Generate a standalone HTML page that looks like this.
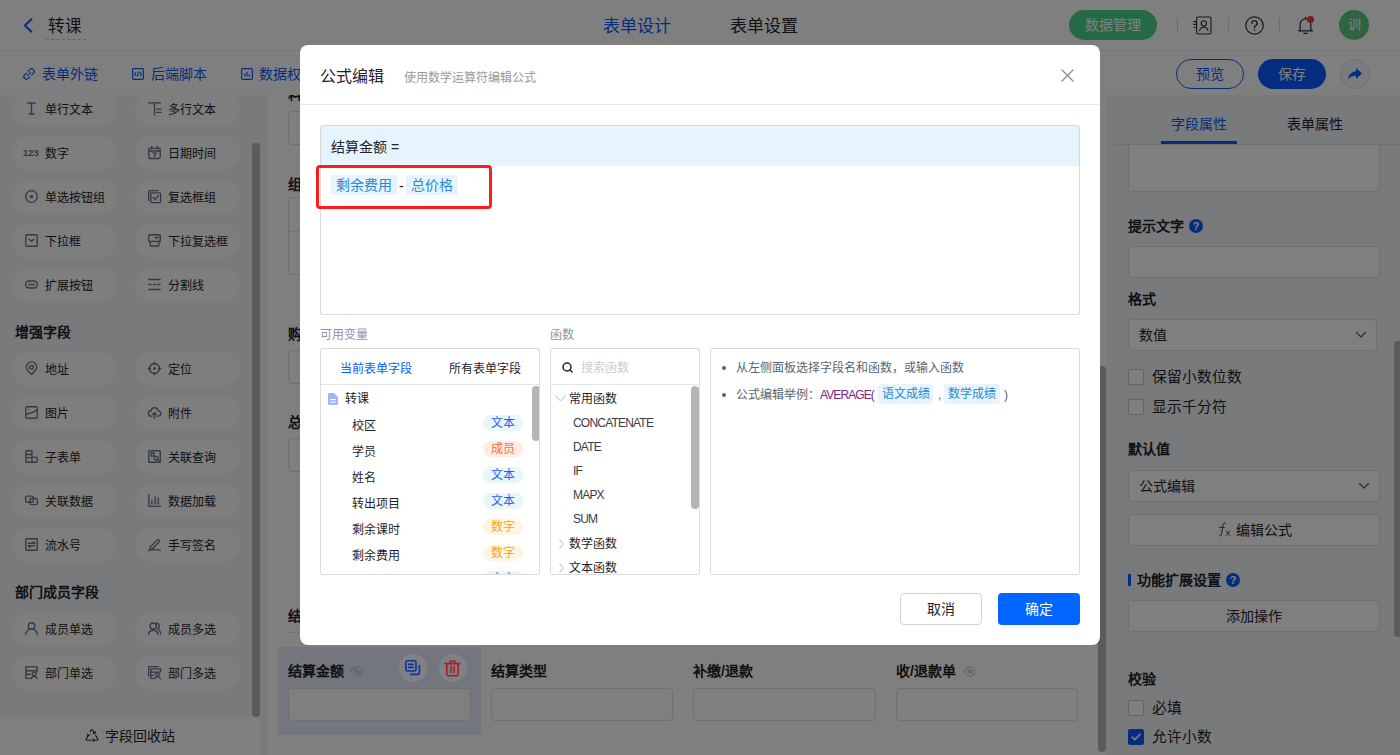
<!DOCTYPE html>
<html lang="zh-CN"><head><meta charset="utf-8">
<style>
*{box-sizing:border-box;margin:0;padding:0}
html,body{width:1400px;height:755px;overflow:hidden;background:#fff}
body{font-family:"Liberation Sans",sans-serif;color:#1f2329;position:relative}
.a{position:absolute;white-space:nowrap}
svg{display:block;overflow:visible}
/* header */
#hdr{left:0;top:0;width:1400px;height:51px;background:#fff;border-bottom:1px solid #ebecee}
#tb{left:0;top:51px;width:1400px;height:44px;background:#fff}
#side{left:0;top:95px;width:268px;height:660px;background:#f2f4f7}
#canvas{left:268px;top:95px;width:838px;height:660px;background:#fff;overflow:hidden}
#rp{left:1106px;top:95px;width:294px;height:660px;background:#f2f4f7;overflow:hidden}
.pill{position:absolute;width:105px;height:34px;border-radius:17px;background:#fcfcfd}
.pill span{position:absolute;left:33px;top:10px;font-size:12px;line-height:16px;color:#1f2329}
.pill svg{position:absolute;left:13px;top:10px}
.sh{position:absolute;left:15px;font-size:14px;font-weight:bold;line-height:20px;color:#1f2329}
.inp{border:1px solid #dcdfe5;border-radius:4px;background:#fff}
.ftag{height:20px;border-radius:2px;background:#e8f3fd;color:#268bd0;font-size:14px;line-height:20px;text-align:center}
.dtag{height:20px;border-radius:3px;background:#e8f3fd;color:#268bd0;font-size:12px;line-height:20px;text-align:center}
.pnl{border:1px solid #dcdcdc;border-radius:2px;overflow:hidden;background:#fff}
.fn{font-size:12px;line-height:20px;color:#3c3c44;letter-spacing:-0.8px}
.mask{left:0;top:0;width:1400px;height:755px;background:rgba(0,0,0,0.5)}
#modal{left:300px;top:45px;width:800px;height:600px;background:#fff;border-radius:8px}
</style></head><body>
<!-- ===== header ===== -->
<div class="a" id="hdr">
  <svg class="a" style="left:23px;top:18px" width="10" height="15" viewBox="0 0 10 15"><path d="M8.5 1.2 L1.8 7.5 L8.5 13.8" fill="none" stroke="#0a5bff" stroke-width="2" stroke-linecap="round" stroke-linejoin="round"/></svg>
  <div class="a" style="left:48px;top:14.5px;font-size:16.6px;line-height:24px;color:#1f2329">转课</div>
  <div class="a" style="left:46px;top:39px;width:40px;height:0;border-top:1px dashed #c9ccd2"></div>
  <div class="a" style="left:603px;top:15px;font-size:17px;line-height:24px;color:#0a5bff">表单设计</div>
  <div class="a" style="left:730px;top:15px;font-size:17px;line-height:24px;color:#1f2329">表单设置</div>
  <div class="a" style="left:1069px;top:10px;width:88px;height:30px;border-radius:15px;background:#4bd38d;color:#fff;font-size:14px;line-height:30px;text-align:center">数据管理</div>
  <div class="a" style="left:1177px;top:18px;width:1px;height:14px;background:#d5d7db"></div>
  <div class="a" style="left:1228px;top:18px;width:1px;height:14px;background:#d5d7db"></div>
  <div class="a" style="left:1279px;top:18px;width:1px;height:14px;background:#d5d7db"></div>
  <svg class="a" style="left:1193px;top:16px" width="19" height="19" viewBox="0 0 19 19" fill="none" stroke="#2b2f36" stroke-width="1.1" stroke-linecap="round" stroke-linejoin="round"><rect x="3.6" y="1" width="14.4" height="17" rx="1.4"/><circle cx="10.8" cy="7.4" r="2.6"/><path d="M6.6 14.6 A4.3 4.3 0 0 1 15 14.6 M0.8 5.6 H3.6 M0.8 8.4 H3.6 M0.8 11.2 H3.6"/></svg>
  <svg class="a" style="left:1245px;top:16px" width="19" height="19" viewBox="0 0 19 19" fill="none" stroke="#2b2f36" stroke-width="1.2" stroke-linecap="round"><circle cx="9.5" cy="9.5" r="8.7"/><path d="M6.9 7.3 A2.6 2.6 0 1 1 10.6 9.6 C9.9 9.9 9.5 10.5 9.5 11.2 V11.8" stroke-width="1.4"/><circle cx="9.5" cy="14.2" r="0.8" fill="#2b2f36" stroke="none"/></svg>
  <svg class="a" style="left:1297px;top:16px" width="17" height="19" viewBox="0 0 17 19" fill="none" stroke="#2b2f36" stroke-width="1.2" stroke-linecap="round" stroke-linejoin="round"><path d="M8.5 1 V2.6 M3.2 13.6 V8.4 C3.2 5.2 5.5 2.8 8.5 2.8 C11.5 2.8 13.8 5.2 13.8 8.4 V13.6 C13.8 14.2 14.6 14.6 15.4 14.8 H1.6 C2.4 14.6 3.2 14.2 3.2 13.6 Z M6.8 17.4 H10.2"/></svg>
  <div class="a" style="left:1307px;top:16px;width:6.5px;height:6.5px;border-radius:50%;background:#f03c3c"></div>
  <div class="a" style="left:1339px;top:10px;width:30px;height:30px;border-radius:15px;background:#5cc97f;color:#fff;font-size:13px;line-height:30px;text-align:center">训</div>
</div>
<!-- ===== toolbar ===== -->
<div class="a" id="tb">
  <svg class="a" style="left:23px;top:17px" width="12" height="12" viewBox="0 0 12 12" fill="none" stroke="#0a5bff" stroke-width="1.2" stroke-linecap="round"><path d="M5.2 3.2 L6.8 1.6 A2.4 2.4 0 0 1 10.4 5.2 L8.8 6.8"/><path d="M6.8 8.8 L5.2 10.4 A2.4 2.4 0 0 1 1.6 6.8 L3.2 5.2"/><path d="M4.3 7.7 L7.7 4.3"/></svg>
  <div class="a" style="left:42px;top:13px;font-size:14px;line-height:20px;color:#0a5bff">表单外链</div>
  <svg class="a" style="left:132px;top:17px" width="12" height="12" viewBox="0 0 12 12" fill="none" stroke="#0a5bff" stroke-width="1.2" stroke-linejoin="round"><rect x="0.6" y="0.6" width="10.8" height="10.8" rx="1.2"/><path d="M4 4 L2.6 6 L4 8 M8 4 L9.4 6 L8 8 M6.6 3.6 L5.4 8.4"/></svg>
  <div class="a" style="left:151px;top:13px;font-size:14px;line-height:20px;color:#0a5bff">后端脚本</div>
  <svg class="a" style="left:241px;top:17px" width="12" height="12" viewBox="0 0 12 12" fill="none" stroke="#0a5bff" stroke-width="1.2"><rect x="0.6" y="0.6" width="10.8" height="10.8" rx="1.2"/><path d="M3.8 5.5 V8.6 M6 3.8 V8.6 M8.2 6.2 V8.6"/></svg>
  <div class="a" style="left:259px;top:13px;font-size:14px;line-height:20px;color:#0a5bff">数据权限</div>
  <div class="a" style="left:1176px;top:8px;width:68px;height:30px;border-radius:15px;border:1px solid #0a5bff;color:#0a5bff;font-size:14px;line-height:28px;text-align:center">预览</div>
  <div class="a" style="left:1258px;top:8px;width:68px;height:30px;border-radius:15px;background:#0a5bff;color:#fff;font-size:14px;line-height:30px;text-align:center">保存</div>
  <div class="a" style="left:1340px;top:8px;width:30px;height:30px;border-radius:15px;background:#f3f6fb;border:1px solid #dde4f0"></div>
  <svg class="a" style="left:1347px;top:16px" width="16" height="14" viewBox="0 0 16 14"><path d="M9 1 L15 6.5 L9 12 V8.8 C5.5 8.8 3 9.8 1 12.6 C1.6 8 4 5 9 4.3 Z" fill="#0a5bff"/></svg>
</div>
<!-- ===== sidebar ===== -->
<div class="a" id="side">
<div class="pill" style="left:12px;top:-3px"><svg width="13" height="13" viewBox="0 0 12 12"><path d="M2.6 0.9 H9.4 M6 0.9 V11.1 M3.8 11.1 H8.2" fill="none" stroke="#67738a" stroke-width="1.25" stroke-linecap="round" stroke-linejoin="round" stroke-width="1.5" stroke-linecap="butt"/></svg><span>单行文本</span></div>
<div class="pill" style="left:135px;top:-3px"><svg width="13" height="13" viewBox="0 0 12 12"><path d="M0.4 0.8 H11.6 M6 0.8 V12 M8 6.6 H12 M8 9.6 H12" fill="none" stroke="#67738a" stroke-width="1.25" stroke-linecap="round" stroke-linejoin="round" stroke-width="1.4" stroke-linecap="butt"/></svg><span>多行文本</span></div>
<div class="pill" style="left:12px;top:41px"><svg width="13" height="13" viewBox="0 0 12 12"><text x="-2" y="9.2" font-family="Liberation Sans" font-weight="bold" font-size="9.2" fill="#67738a" letter-spacing="-0.3">123</text></svg><span>数字</span></div>
<div class="pill" style="left:135px;top:41px"><svg width="13" height="13" viewBox="0 0 12 12"><rect x="0.7" y="1.9" width="10.6" height="9.6" rx="1.3" fill="none" stroke="#67738a" stroke-width="1.25" stroke-linecap="round" stroke-linejoin="round"/><path d="M0.7 4.6 H11.3 M3.4 0.5 V2.8 M8.6 0.5 V2.8 M4.6 6.4 H7.4 L5.6 9.8" fill="none" stroke="#67738a" stroke-width="1.25" stroke-linecap="round" stroke-linejoin="round"/></svg><span>日期时间</span></div>
<div class="pill" style="left:12px;top:85px"><svg width="13" height="13" viewBox="0 0 12 12"><circle cx="6" cy="6" r="5.4" fill="none" stroke="#67738a" stroke-width="1.25" stroke-linecap="round" stroke-linejoin="round"/><circle cx="6" cy="6" r="1.5" fill="#67738a"/></svg><span>单选按钮组</span></div>
<div class="pill" style="left:135px;top:85px"><svg width="13" height="13" viewBox="0 0 12 12"><path d="M0.6 9.6 V1.6 A1 1 0 0 1 1.6 0.6 H9.4" fill="none" stroke="#67738a" stroke-width="1.25" stroke-linecap="round" stroke-linejoin="round"/><rect x="2.6" y="2.6" width="9" height="9" rx="0.8" fill="none" stroke="#67738a" stroke-width="1.25" stroke-linecap="round" stroke-linejoin="round"/><path d="M4.8 7 L6.6 8.8 L9.6 5.2" fill="none" stroke="#67738a" stroke-width="1.25" stroke-linecap="round" stroke-linejoin="round"/></svg><span>复选框组</span></div>
<div class="pill" style="left:12px;top:129px"><svg width="13" height="13" viewBox="0 0 12 12"><rect x="0.7" y="0.7" width="10.6" height="10.6" rx="0.8" fill="none" stroke="#67738a" stroke-width="1.25" stroke-linecap="round" stroke-linejoin="round"/><path d="M3.8 4.8 L6 6.8 L8.2 4.8" fill="none" stroke="#67738a" stroke-width="1.25" stroke-linecap="round" stroke-linejoin="round"/></svg><span>下拉框</span></div>
<div class="pill" style="left:135px;top:129px"><svg width="13" height="13" viewBox="0 0 12 12"><path d="M0.7 1.5 A0.8 0.8 0 0 1 1.5 0.7 H10.5 A0.8 0.8 0 0 1 11.3 1.5 V6.8 H0.7 Z M2 6.8 V10.3 A0.8 0.8 0 0 0 2.8 11.1 H9.2 A0.8 0.8 0 0 0 10 10.3 V6.8" fill="none" stroke="#67738a" stroke-width="1.25" stroke-linecap="round" stroke-linejoin="round"/><path d="M6.6 2.8 L8 4.2 L9.4 2.8" fill="none" stroke="#67738a" stroke-width="1.25" stroke-linecap="round" stroke-linejoin="round"/></svg><span>下拉复选框</span></div>
<div class="pill" style="left:12px;top:173px"><svg width="13" height="13" viewBox="0 0 12 12"><rect x="0.6" y="2.8" width="10.8" height="6.4" rx="3.2" fill="none" stroke="#67738a" stroke-width="1.25" stroke-linecap="round" stroke-linejoin="round"/><path d="M3.4 6 H8.6" fill="none" stroke="#67738a" stroke-width="1.25" stroke-linecap="round" stroke-linejoin="round"/></svg><span>扩展按钮</span></div>
<div class="pill" style="left:135px;top:173px"><svg width="13" height="13" viewBox="0 0 12 12"><path d="M0.8 1.4 H11.2 M0.8 6 H2.8 M5 6 H7 M9.2 6 H11.2 M0.8 10.6 H11.2" fill="none" stroke="#67738a" stroke-width="1.25" stroke-linecap="round" stroke-linejoin="round"/></svg><span>分割线</span></div>
<div class="pill" style="left:12px;top:257px"><svg width="13" height="13" viewBox="0 0 12 12"><path d="M6 11.6 C2.8 8.6 1.2 6.4 1.2 4.7 A4.8 4.8 0 0 1 10.8 4.7 C10.8 6.4 9.2 8.6 6 11.6 Z" fill="none" stroke="#67738a" stroke-width="1.25" stroke-linecap="round" stroke-linejoin="round"/><circle cx="6" cy="4.9" r="1.7" fill="none" stroke="#67738a" stroke-width="1.25" stroke-linecap="round" stroke-linejoin="round"/></svg><span>地址</span></div>
<div class="pill" style="left:135px;top:257px"><svg width="13" height="13" viewBox="0 0 12 12"><circle cx="6" cy="6" r="4.6" fill="none" stroke="#67738a" stroke-width="1.25" stroke-linecap="round" stroke-linejoin="round"/><circle cx="6" cy="6" r="1.3" fill="#67738a"/><path d="M6 0.2 V2.2 M6 9.8 V11.8 M0.2 6 H2.2 M9.8 6 H11.8" fill="none" stroke="#67738a" stroke-width="1.25" stroke-linecap="round" stroke-linejoin="round"/></svg><span>定位</span></div>
<div class="pill" style="left:12px;top:301px"><svg width="13" height="13" viewBox="0 0 12 12"><rect x="0.7" y="0.7" width="10.6" height="10.6" rx="1.2" fill="none" stroke="#67738a" stroke-width="1.25" stroke-linecap="round" stroke-linejoin="round"/><path d="M1.2 8.2 C3.4 5.2 6.2 8 10.8 3.8 M3.2 3.2 V3.3" fill="none" stroke="#67738a" stroke-width="1.25" stroke-linecap="round" stroke-linejoin="round"/></svg><span>图片</span></div>
<div class="pill" style="left:135px;top:301px"><svg width="13" height="13" viewBox="0 0 12 12"><path d="M3.6 9.4 H3 A2.5 2.5 0 0 1 2.7 4.4 A3.4 3.4 0 0 1 9.4 4.4 A2.5 2.5 0 0 1 9.2 9.4 H8.4" fill="none" stroke="#67738a" stroke-width="1.25" stroke-linecap="round" stroke-linejoin="round"/><path d="M6 11.6 V6.2 M4.3 7.9 L6 6.2 L7.7 7.9" fill="none" stroke="#67738a" stroke-width="1.25" stroke-linecap="round" stroke-linejoin="round"/></svg><span>附件</span></div>
<div class="pill" style="left:12px;top:345px"><svg width="13" height="13" viewBox="0 0 12 12"><path d="M1.8 0.7 H6.4 V11.3 H1.8 A1 1 0 0 1 0.8 10.3 V1.7 A1 1 0 0 1 1.8 0.7 Z M0.8 4.2 H6.4 M0.8 7 H6.4 M6.4 6.6 H10.2 A1 1 0 0 1 11.2 7.6 V10.3 A1 1 0 0 1 10.2 11.3 H6.4" fill="none" stroke="#67738a" stroke-width="1.25" stroke-linecap="round" stroke-linejoin="round"/></svg><span>子表单</span></div>
<div class="pill" style="left:135px;top:345px"><svg width="13" height="13" viewBox="0 0 12 12"><rect x="0.7" y="0.7" width="10.6" height="10.6" rx="0.8" fill="none" stroke="#67738a" stroke-width="1.25" stroke-linecap="round" stroke-linejoin="round"/><path d="M2.8 2.8 H5.6 V5.6 H2.8 Z" fill="none" stroke="#67738a" stroke-width="1.25" stroke-linecap="round" stroke-linejoin="round"/><circle cx="7.6" cy="7.6" r="1.7" fill="none" stroke="#67738a" stroke-width="1.25" stroke-linecap="round" stroke-linejoin="round"/><path d="M8.9 8.9 L11 11" fill="none" stroke="#67738a" stroke-width="1.25" stroke-linecap="round" stroke-linejoin="round"/></svg><span>关联查询</span></div>
<div class="pill" style="left:12px;top:389px"><svg width="13" height="13" viewBox="0 0 12 12"><rect x="0.6" y="2" width="7" height="5.6" rx="1.2" fill="none" stroke="#67738a" stroke-width="1.25" stroke-linecap="round" stroke-linejoin="round"/><rect x="4.6" y="4.2" width="6.8" height="5.6" rx="1.2" fill="none" stroke="#67738a" stroke-width="1.25" stroke-linecap="round" stroke-linejoin="round"/></svg><span>关联数据</span></div>
<div class="pill" style="left:135px;top:389px"><svg width="13" height="13" viewBox="0 0 12 12"><path d="M0.8 0.4 V11.4 H11.6 M3.6 5.6 V9.2 M6.6 2.6 V9.2 M9.4 3.6 V9.2" fill="none" stroke="#67738a" stroke-width="1.25" stroke-linecap="round" stroke-linejoin="round"/></svg><span>数据加载</span></div>
<div class="pill" style="left:12px;top:433px"><svg width="13" height="13" viewBox="0 0 12 12"><rect x="0.7" y="0.7" width="10.6" height="10.6" rx="0.6" fill="none" stroke="#67738a" stroke-width="1.25" stroke-linecap="round" stroke-linejoin="round"/><path d="M3 4.8 H9 L7.6 3.4 M9 7.2 H3 L4.4 8.6" fill="none" stroke="#67738a" stroke-width="1.25" stroke-linecap="round" stroke-linejoin="round"/></svg><span>流水号</span></div>
<div class="pill" style="left:135px;top:433px"><svg width="13" height="13" viewBox="0 0 12 12"><path d="M2.2 8.2 L8.6 1.8 A1.1 1.1 0 0 1 10.2 1.8 L10.4 2 A1.1 1.1 0 0 1 10.4 3.6 L4 10 L1.8 10.2 Z M0.6 11.6 C3.4 10.4 5.6 10.2 11.4 11.2" fill="none" stroke="#67738a" stroke-width="1.25" stroke-linecap="round" stroke-linejoin="round"/></svg><span>手写签名</span></div>
<div class="pill" style="left:12px;top:517px"><svg width="13" height="13" viewBox="0 0 12 12"><circle cx="6" cy="3.7" r="3" fill="none" stroke="#67738a" stroke-width="1.25" stroke-linecap="round" stroke-linejoin="round"/><path d="M0.8 11.6 A5.2 5.2 0 0 1 11.2 11.6" fill="none" stroke="#67738a" stroke-width="1.25" stroke-linecap="round" stroke-linejoin="round"/></svg><span>成员单选</span></div>
<div class="pill" style="left:135px;top:517px"><svg width="13" height="13" viewBox="0 0 12 12"><circle cx="4.8" cy="3.8" r="2.9" fill="none" stroke="#67738a" stroke-width="1.25" stroke-linecap="round" stroke-linejoin="round"/><path d="M0.4 11.4 A4.5 4.8 0 0 1 9.2 11.4 M7.6 1 A2.8 2.8 0 0 1 8.6 6.4 M10 7.2 A4.4 4.8 0 0 1 11.8 11.2" fill="none" stroke="#67738a" stroke-width="1.25" stroke-linecap="round" stroke-linejoin="round"/></svg><span>成员多选</span></div>
<div class="pill" style="left:12px;top:561px"><svg width="13" height="13" viewBox="0 0 12 12"><path d="M11.2 5.4 V0.8 H0.8 V11.4 H4.8 M0.8 4.4 H10 M0.8 7.6 H4.6" fill="none" stroke="#67738a" stroke-width="1.25" stroke-linecap="round" stroke-linejoin="round"/><circle cx="8.4" cy="7.4" r="1.8" fill="none" stroke="#67738a" stroke-width="1.25" stroke-linecap="round" stroke-linejoin="round"/><path d="M5.6 11.6 A2.9 2.6 0 0 1 11.2 11.6" fill="none" stroke="#67738a" stroke-width="1.25" stroke-linecap="round" stroke-linejoin="round"/></svg><span>部门单选</span></div>
<div class="pill" style="left:135px;top:561px"><svg width="13" height="13" viewBox="0 0 12 12"><path d="M0.6 9.4 V0.6 H9.4 M11.6 5.4 V2.6 H2.6 V11.4 H5.4 M2.6 5.6 H10.6 M2.6 8.4 H5.4" fill="none" stroke="#67738a" stroke-width="1.25" stroke-linecap="round" stroke-linejoin="round"/><circle cx="8.8" cy="7.9" r="1.6" fill="none" stroke="#67738a" stroke-width="1.25" stroke-linecap="round" stroke-linejoin="round"/><path d="M6.2 11.8 A2.7 2.5 0 0 1 11.4 11.8" fill="none" stroke="#67738a" stroke-width="1.25" stroke-linecap="round" stroke-linejoin="round"/></svg><span>部门多选</span></div>
<div class="sh" style="top:227px">增强字段</div>
<div class="sh" style="top:487px">部门成员字段</div>
<div class="a" style="left:252px;top:48px;width:8px;height:574px;border-radius:4px;background:#b6b7b9"></div>
<div class="a" style="left:0;top:622px;width:260px;height:38px;background:#fff"></div>
<svg class="a" style="left:85px;top:634px" width="14" height="14" viewBox="0 0 14 14" fill="none" stroke="#1f2329" stroke-width="1.1" stroke-linecap="round" stroke-linejoin="round"><path d="M5.2 2.6 L6.3 1 A0.8 0.8 0 0 1 7.7 1 L9.6 4.2 M10.6 6.2 L12.8 10 A0.8 0.8 0 0 1 12.1 11.2 H9.6 M6.6 11.2 H1.9 A0.8 0.8 0 0 1 1.2 10 L3.2 6.6"/><path d="M8.2 4.4 L9.8 4.4 L10.4 2.8 M7.8 9.8 L9.4 11.2 L8 12.6 M2.4 5.2 L3.4 6.6 L4.8 5.8"/></svg>
<div class="a" style="left:105px;top:631px;font-size:14px;line-height:20px;color:#1f2329">字段回收站</div>
</div>
<!-- ===== canvas ===== -->
<div class="a" id="canvas">
  <div class="a" style="left:20px;top:-11px;font-size:14px;font-weight:bold;line-height:20px">料号</div>
  <div class="a inp" style="left:20px;top:16px;width:790px;height:34px"></div>
  <div class="a" style="left:20px;top:79px;font-size:14px;font-weight:bold;line-height:20px">组合</div>
  <div class="a inp" style="left:20px;top:102px;width:790px;height:78px"></div>
  <div class="a" style="left:21px;top:136px;width:788px;height:1px;background:#e4e6ea"></div>
  <div class="a" style="left:20px;top:229px;font-size:14px;font-weight:bold;line-height:20px">购买</div>
  <div class="a inp" style="left:20px;top:255px;width:790px;height:34px"></div>
  <div class="a" style="left:20px;top:317px;font-size:14px;font-weight:bold;line-height:20px">总价</div>
  <div class="a inp" style="left:20px;top:343px;width:790px;height:34px"></div>
  <div class="a" style="left:20px;top:511px;font-size:14px;font-weight:bold;line-height:20px">结算</div>
  <div class="a" style="left:20px;top:537px;width:790px;height:1px;background:#e4e6ea"></div>
  <div class="a" style="left:10px;top:552px;width:203px;height:88px;background:#e6edf9"></div>
  <div class="a" style="left:20px;top:566px;font-size:14px;font-weight:bold;line-height:20px">结算金额</div>
  <svg class="a" style="left:82px;top:571px" width="14" height="11" viewBox="0 0 14 11" fill="none" stroke="#b8bdc6" stroke-width="1" stroke-linecap="round"><path d="M1 5.5 C3 2 5 1 7 1 C9 1 11 2 13 5.5 C11 9 9 10 7 10 C5 10 3 9 1 5.5 Z"/><circle cx="7" cy="5.5" r="1.8"/><path d="M2.5 1.5 L11.5 9.5"/></svg>
  <div class="a inp" style="left:20px;top:593px;width:183px;height:33px"></div>
  <div class="a" style="left:223px;top:566px;font-size:14px;font-weight:bold;line-height:20px">结算类型</div>
  <div class="a inp" style="left:223px;top:593px;width:182px;height:33px"></div>
  <div class="a" style="left:425px;top:566px;font-size:14px;font-weight:bold;line-height:20px">补缴/退款</div>
  <div class="a inp" style="left:425px;top:593px;width:183px;height:33px"></div>
  <div class="a" style="left:628px;top:566px;font-size:14px;font-weight:bold;line-height:20px">收/退款单</div>
  <svg class="a" style="left:695px;top:571px" width="14" height="11" viewBox="0 0 14 11" fill="none" stroke="#b8bdc6" stroke-width="1" stroke-linecap="round"><path d="M1 5.5 C3 2 5 1 7 1 C9 1 11 2 13 5.5 C11 9 9 10 7 10 C5 10 3 9 1 5.5 Z"/><circle cx="7" cy="5.5" r="1.8"/><path d="M2.5 1.5 L11.5 9.5"/></svg>
  <div class="a inp" style="left:628px;top:593px;width:182px;height:33px"></div>
  <div class="a" style="left:830px;top:271px;width:8px;height:386px;border-radius:4px;background:#b6b7b9"></div>
</div>
<!-- ===== right panel ===== -->
<div class="a" id="rp">
<div class="a" style="left:65px;top:19px;font-size:14px;line-height:20px;color:#0a5bff">字段属性</div>
<div class="a" style="left:181px;top:19px;font-size:14px;line-height:20px">表单属性</div>
<div class="a" style="left:8px;top:49px;width:286px;height:1px;background:#dfe1e5"></div>
<div class="a" style="left:55px;top:46px;width:76px;height:3px;background:#0a5bff"></div>
<div class="a" style="left:0;top:50px;width:294px;height:610px;overflow:hidden">
<div class="a inp" style="left:22px;top:-20px;width:252px;height:67px"></div>
<div class="a" style="left:22px;top:71px;font-size:14px;font-weight:bold;line-height:20px">提示文字</div>
<div class="a" style="left:83px;top:74px;width:14px;height:14px;border-radius:7px;background:#0a5bff;color:#fff;font-size:11px;font-weight:bold;line-height:14px;text-align:center">?</div>
<div class="a inp" style="left:22px;top:101px;width:252px;height:32px"></div>
<div class="a" style="left:22px;top:144px;font-size:14px;font-weight:bold;line-height:20px">格式</div>
<div class="a inp" style="left:22px;top:174px;width:249px;height:32px"></div>
<div class="a" style="left:33px;top:180px;font-size:14px;line-height:20px">数值</div>
<svg class="a" style="left:249px;top:186px" width="12" height="8" viewBox="0 0 12 8" fill="none" stroke="#5b6474" stroke-width="1.3" stroke-linecap="round" stroke-linejoin="round"><path d="M1.5 1.5 L6 6 L10.5 1.5"/></svg>
<div class="a" style="left:22px;top:224px;width:16px;height:16px;border:1px solid #c6c9cf;border-radius:2px;background:#fff"></div>
<div class="a" style="left:46px;top:222px;font-size:14.7px;line-height:20px">保留小数位数</div>
<div class="a" style="left:22px;top:254px;width:16px;height:16px;border:1px solid #c6c9cf;border-radius:2px;background:#fff"></div>
<div class="a" style="left:46px;top:252px;font-size:14.7px;line-height:20px">显示千分符</div>
<div class="a" style="left:22px;top:294px;font-size:14px;font-weight:bold;line-height:20px">默认值</div>
<div class="a inp" style="left:22px;top:325px;width:252px;height:32px"></div>
<div class="a" style="left:33px;top:331px;font-size:14px;line-height:20px">公式编辑</div>
<svg class="a" style="left:252px;top:337px" width="12" height="8" viewBox="0 0 12 8" fill="none" stroke="#5b6474" stroke-width="1.3" stroke-linecap="round" stroke-linejoin="round"><path d="M1.5 1.5 L6 6 L10.5 1.5"/></svg>
<div class="a inp" style="left:22px;top:369px;width:252px;height:32px"></div>
<svg class="a" style="left:112px;top:377px" width="14" height="15" viewBox="0 0 14 15" fill="none" stroke="#3d4450" stroke-width="1" stroke-linecap="round"><path d="M7.4 1.2 C6.2 0.6 5.4 1.2 5.1 2.6 L3.4 12.4 C3.1 13.8 2.4 14.2 1.4 13.8 M1.8 5.4 H6.4"/><path d="M8.2 9.2 L11.6 13.4 M11.6 9.2 L8.2 13.4"/></svg>
<div class="a" style="left:130px;top:375px;font-size:14px;line-height:20px">编辑公式</div>
<div class="a" style="left:22px;top:429px;width:3px;height:12px;background:#0a5bff"></div>
<div class="a" style="left:31px;top:425px;font-size:14px;font-weight:bold;line-height:20px">功能扩展设置</div>
<div class="a" style="left:120px;top:428px;width:14px;height:14px;border-radius:7px;background:#0a5bff;color:#fff;font-size:11px;font-weight:bold;line-height:14px;text-align:center">?</div>
<div class="a inp" style="left:22px;top:455px;width:252px;height:32px"></div>
<div class="a" style="left:120px;top:461px;font-size:14px;line-height:20px">添加操作</div>
<div class="a" style="left:22px;top:524px;font-size:14px;font-weight:bold;line-height:20px">校验</div>
<div class="a" style="left:22px;top:555px;width:16px;height:16px;border:1px solid #c6c9cf;border-radius:2px;background:#fff"></div>
<div class="a" style="left:46px;top:553px;font-size:14.7px;line-height:20px">必填</div>
<div class="a" style="left:22px;top:584px;width:16px;height:16px;border-radius:2px;background:#0a5bff"></div>
<svg class="a" style="left:25px;top:588px" width="10" height="8" viewBox="0 0 10 8" fill="none" stroke="#fff" stroke-width="1.6" stroke-linecap="round" stroke-linejoin="round"><path d="M1 4 L3.8 6.6 L9 1.2"/></svg>
<div class="a" style="left:46px;top:582px;font-size:14.7px;line-height:20px">允许小数</div>
</div>
<div class="a" style="left:288px;top:246px;width:8px;height:296px;border-radius:4px;background:#b6b7b9"></div>
</div>
<div class="a mask"></div>
<div class="a" style="left:399px;top:654px;width:28px;height:28px;border-radius:14px;background:#808185"></div>
<svg class="a" style="left:405px;top:660px" width="16" height="16" viewBox="0 0 16 16" fill="none" stroke="#0833a6" stroke-width="1.6" stroke-linecap="round" stroke-linejoin="round"><rect x="0.8" y="0.8" width="10.2" height="10.2" rx="2"/><path d="M3.6 4.4 H8.2 M3.6 7.4 H8.2 M14.4 5.6 V12.6 A1.8 1.8 0 0 1 12.6 14.4 H5.6"/></svg>
<div class="a" style="left:439px;top:654px;width:28px;height:28px;border-radius:14px;background:#808185"></div>
<svg class="a" style="left:444px;top:660px" width="17" height="17" viewBox="0 0 17 17" fill="none" stroke="#a81c24" stroke-width="1.6" stroke-linecap="round" stroke-linejoin="round"><path d="M1 3.6 H16 M5.8 3.6 V2.6 A1.6 1.6 0 0 1 7.4 1 H9.6 A1.6 1.6 0 0 1 11.2 2.6 V3.6 M2.8 3.8 V14.2 A1.6 1.6 0 0 0 4.4 15.8 H12.6 A1.6 1.6 0 0 0 14.2 14.2 V3.8 M7 6.6 V12.6 M10 6.6 V12.6"/></svg>
<!-- ===== modal ===== -->
<div class="a" id="modal">
<div class="a" style="left:20px;top:21px;font-size:16px;line-height:22px;color:#1f2329">公式编辑</div>
<div class="a" style="left:104px;top:24px;font-size:12px;line-height:18px;color:#999">使用数学运算符编辑公式</div>
<svg class="a" style="left:761px;top:24px" width="13" height="13" viewBox="0 0 13 13" stroke="#8c8c8c" stroke-width="1.3" stroke-linecap="round"><path d="M1 1 L12 12 M12 1 L1 12"/></svg>
<div class="a" style="left:0;top:59px;width:800px;height:1px;background:#e8e8e8"></div>
<div class="a" style="left:20px;top:80px;width:760px;height:190px;border:1px solid #d9d9d9;border-radius:2px;overflow:hidden">
<div class="a" style="left:0;top:0;width:758px;height:40px;background:#e6f4ff"></div>
<div class="a" style="left:10px;top:11px;font-size:14px;line-height:20px;color:#1f2329">结算金额 =</div>
</div>
<div class="a ftag" style="left:31px;top:130px;width:66px">剩余费用</div>
<div class="a" style="left:99px;top:131px;font-size:14px;line-height:20px;color:#1f2329">-</div>
<div class="a ftag" style="left:106px;top:130px;width:52px">总价格</div>
<div class="a" style="left:16px;top:120px;width:176px;height:44px;border:3px solid #ff1c1c;border-radius:4px"></div>
<div class="a" style="left:20px;top:280px;font-size:12px;line-height:20px;color:#8f959e">可用变量</div>
<div class="a" style="left:250px;top:280px;font-size:12px;line-height:20px;color:#8f959e">函数</div>
<div class="a pnl" style="left:20px;top:303px;width:220px;height:227px">
<div class="a" style="left:19px;top:10px;font-size:12px;line-height:20px;color:#0a5bff">当前表单字段</div>
<div class="a" style="left:128px;top:10px;font-size:12px;line-height:20px;color:#1f2329">所有表单字段</div>
<div class="a" style="left:0;top:35px;width:218px;height:1px;background:#e4e4e4"></div>
<svg class="a" style="left:7px;top:44px" width="10" height="12" viewBox="0 0 10 12"><path d="M0 1 A1 1 0 0 1 1 0 H6 L10 4 V11 A1 1 0 0 1 9 12 H1 A1 1 0 0 1 0 11 Z" fill="#a4b3ff"/><path d="M2 6.5 H8 M2 9 H8" stroke="#fff" stroke-width="1"/></svg>
<div class="a" style="left:24px;top:40px;font-size:12px;line-height:20px;color:#1f2329">转课</div>
<div class="a" style="left:31px;top:66.5px;font-size:12px;line-height:20px;color:#1f2329">校区</div>
<div class="a" style="left:162px;top:66.0px;width:40px;height:16px;border-radius:8px;background:#e6f7f6;color:#2b5cff;font-size:12px;line-height:16px;text-align:center">文本</div>
<div class="a" style="left:31px;top:92.5px;font-size:12px;line-height:20px;color:#1f2329">学员</div>
<div class="a" style="left:162px;top:92.0px;width:40px;height:16px;border-radius:8px;background:#ffece4;color:#ff6a2b;font-size:12px;line-height:16px;text-align:center">成员</div>
<div class="a" style="left:31px;top:118.5px;font-size:12px;line-height:20px;color:#1f2329">姓名</div>
<div class="a" style="left:162px;top:118.0px;width:40px;height:16px;border-radius:8px;background:#e6f7f6;color:#2b5cff;font-size:12px;line-height:16px;text-align:center">文本</div>
<div class="a" style="left:31px;top:144.5px;font-size:12px;line-height:20px;color:#1f2329">转出项目</div>
<div class="a" style="left:162px;top:144.0px;width:40px;height:16px;border-radius:8px;background:#e6f7f6;color:#2b5cff;font-size:12px;line-height:16px;text-align:center">文本</div>
<div class="a" style="left:31px;top:170.5px;font-size:12px;line-height:20px;color:#1f2329">剩余课时</div>
<div class="a" style="left:162px;top:170.0px;width:40px;height:16px;border-radius:8px;background:#fff5e0;color:#f5a623;font-size:12px;line-height:16px;text-align:center">数字</div>
<div class="a" style="left:31px;top:196.5px;font-size:12px;line-height:20px;color:#1f2329">剩余费用</div>
<div class="a" style="left:162px;top:196.0px;width:40px;height:16px;border-radius:8px;background:#fff5e0;color:#f5a623;font-size:12px;line-height:16px;text-align:center">数字</div>
<div class="a" style="left:162px;top:222.0px;width:40px;height:16px;border-radius:8px;background:#e6f7f6;color:#2b5cff;font-size:12px;line-height:16px;text-align:center">文本</div>
<div class="a" style="left:211px;top:37px;width:8px;height:55px;border-radius:4px;background:#b5b5b5"></div>
</div>
<div class="a pnl" style="left:250px;top:303px;width:150px;height:227px">
<svg class="a" style="left:11px;top:13px" width="11" height="11" viewBox="0 0 11 11" fill="none" stroke="#1f2329" stroke-width="1.5" stroke-linecap="round"><circle cx="5" cy="5" r="4"/><path d="M8 8 L10 10"/></svg>
<div class="a" style="left:30px;top:9px;font-size:12px;line-height:20px;color:#c9cdd4">搜索函数</div>
<div class="a" style="left:0;top:35px;width:148px;height:1px;background:#e4e4e4"></div>
<svg class="a" style="left:4px;top:46px" width="11" height="7" viewBox="0 0 11 7" fill="none" stroke="#b5bac2" stroke-width="1"><path d="M0.5 0.5 L5.5 6 L10.5 0.5"/></svg>
<div class="a" style="left:18px;top:40px;font-size:12px;line-height:20px;color:#1f2329">常用函数</div>
<div class="a fn" style="left:22px;top:64px">CONCATENATE</div>
<div class="a fn" style="left:22px;top:88px">DATE</div>
<div class="a fn" style="left:22px;top:112px">IF</div>
<div class="a fn" style="left:22px;top:136px">MAPX</div>
<div class="a fn" style="left:22px;top:160px">SUM</div>
<svg class="a" style="left:8px;top:189.5px" width="5" height="10" viewBox="0 0 5 10" fill="none" stroke="#b5bac2" stroke-width="1"><path d="M0.5 0.5 L4.5 5 L0.5 9.5"/></svg>
<div class="a" style="left:18px;top:184.5px;font-size:12px;line-height:20px;color:#1f2329">数学函数</div>
<svg class="a" style="left:8px;top:213.5px" width="5" height="10" viewBox="0 0 5 10" fill="none" stroke="#b5bac2" stroke-width="1"><path d="M0.5 0.5 L4.5 5 L0.5 9.5"/></svg>
<div class="a" style="left:18px;top:208.5px;font-size:12px;line-height:20px;color:#1f2329">文本函数</div>
<div class="a" style="left:140px;top:37px;width:8px;height:123px;border-radius:4px;background:#b5b5b5"></div>
</div>
<div class="a pnl" style="left:410px;top:303px;width:370px;height:227px">
<div class="a" style="left:11px;top:17px;width:4px;height:4px;border-radius:2px;background:#5b6474"></div>
<div class="a" style="left:25px;top:9px;font-size:12px;line-height:20px;color:#5b6474">从左侧面板选择字段名和函数，或输入函数</div>
<div class="a" style="left:11px;top:44px;width:4px;height:4px;border-radius:2px;background:#5b6474"></div>
<div class="a" style="left:25px;top:36px;font-size:12px;line-height:20px;color:#5b6474">公式编辑举例：<span style="color:#7d2383;letter-spacing:-0.9px">AVERAGE(</span></div>
<div class="a dtag" style="left:167px;top:35px;width:55px">语文成绩</div>
<div class="a" style="left:227px;top:36px;font-size:12px;line-height:20px;color:#5b6474">,</div>
<div class="a dtag" style="left:233px;top:35px;width:56px">数学成绩</div>
<div class="a" style="left:293px;top:36px;font-size:12px;line-height:20px;color:#5b6474">)</div>
</div>
<div class="a" style="left:600px;top:548px;width:82px;height:32px;border:1px solid #d0d3d8;border-radius:4px;font-size:14px;line-height:30px;text-align:center;color:#1f2329">取消</div>
<div class="a" style="left:698px;top:548px;width:82px;height:32px;border-radius:4px;background:#0066ff;font-size:14px;line-height:32px;text-align:center;color:#fff;font-weight:500">确定</div>
</div>
</body></html>
